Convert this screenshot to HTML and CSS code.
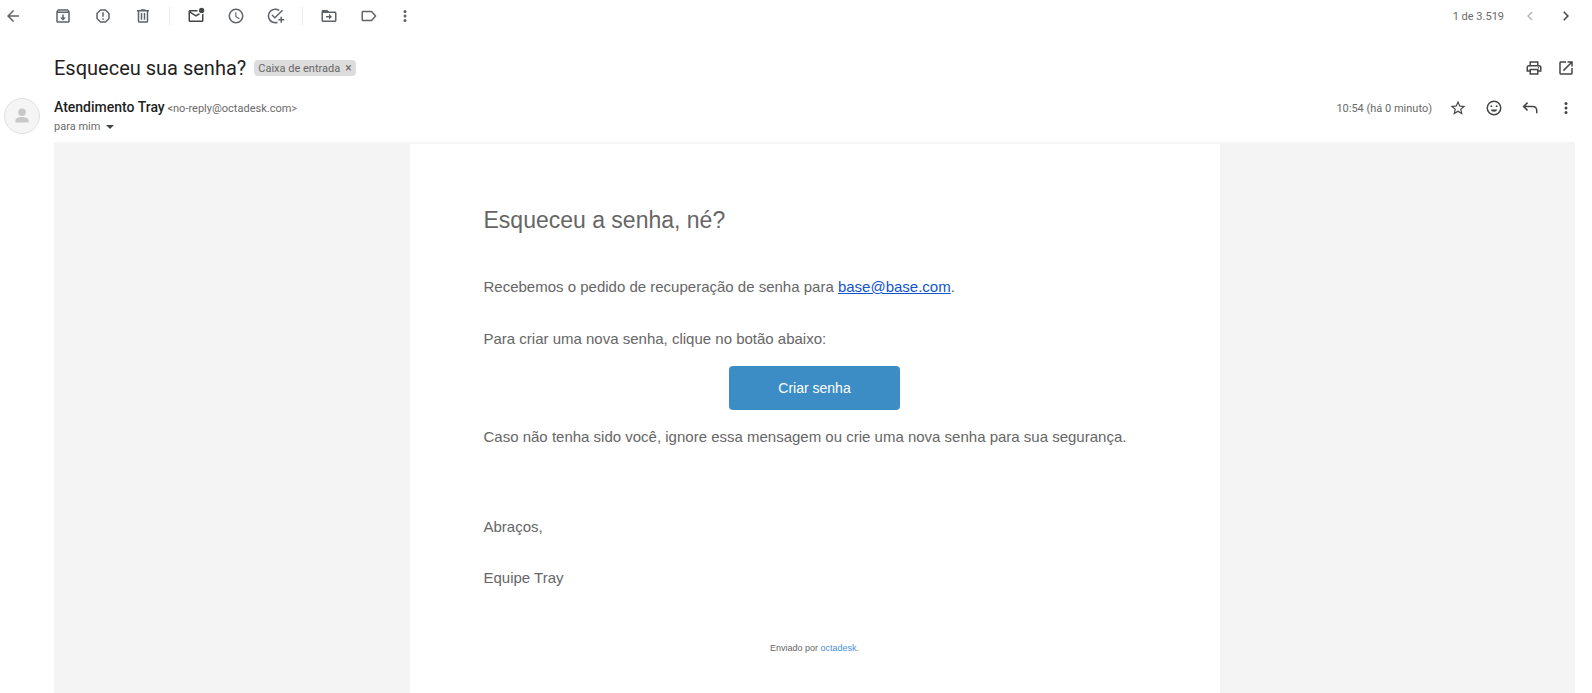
FILE: index.html
```html
<!DOCTYPE html>
<html lang="pt-BR">
<head>
  <meta charset="utf-8">
  <title>Esqueceu sua senha?</title>
  <link rel="stylesheet" href="styles.css">
</head>
<body>
  <header class="toolbar">
    <div class="toolbar-back">
      <button class="icon-btn" aria-label="Voltar">
        <svg viewBox="0 0 24 24"><path d="M20 11H7.800l5.600-5.600L12 4l-8 8 8 8 1.400-1.400L7.800 13H20z"/></svg>
      </button>
    </div>
    <div class="toolbar-actions">
      <button class="icon-btn" aria-label="Arquivar">
        <svg viewBox="0 0 24 24"><path d="M20.500 5.200l-1.400-1.700C18.900 3.200 18.500 3 18 3H6c-.5 0-.9.2-1.200.5L3.500 5.200C3.200 5.600 3 6 3 6.500V19c0 1.100.9 2 2 2h14c1.100 0 2-.9 2-2V6.500c0-.5-.2-.9-.5-1.300zM6.200 5h11.600l.8 1H5.400zM5 19V8h14v11zm8-9h-2v4H8l4 4 4-4h-3z"/></svg>
      </button>
      <button class="icon-btn" aria-label="Denunciar spam">
        <svg viewBox="0 0 24 24"><path d="M15.700 3H8.300L3 8.300v7.400L8.300 21h7.400l5.300-5.300V8.300zM19 14.900L14.900 19H9.100L5 14.900V9.100L9.100 5h5.800L19 9.100zM11 7h2v6h-2zm0 8h2v2h-2z"/></svg>
      </button>
      <button class="icon-btn" aria-label="Excluir">
        <svg viewBox="0 0 24 24"><path d="M15 4V3H9v1H4v2h1v13c0 1.100.9 2 2 2h10c1.100 0 2-.9 2-2V6h1V4zm2 15H7V6h10zM9 8h2v9H9zm4 0h2v9h-2z"/></svg>
      </button>
      <span class="divider"></span>
      <button class="icon-btn dark" aria-label="Marcar como não lida">
        <svg viewBox="0 0 24 24"><path d="M20 9.500V18H4V8l8 5 6-3.800c-.9-.1-1.700-.4-2.400-.9L12 10.700 4.400 6H14c-.1-.7 0-1.400.2-2H4c-1.100 0-2 .9-2 2v12c0 1.100.9 2 2 2h16c1.100 0 2-.9 2-2V8.500c-.6.500-1.300.8-2 1z"/><circle cx="19.500" cy="4.500" r="3.500"/></svg>
      </button>
      <button class="icon-btn" aria-label="Adiar">
        <svg viewBox="0 0 24 24"><path d="M12 2a10 10 0 1 0 0 20 10 10 0 0 0 0-20zm0 18a8 8 0 1 1 0-16 8 8 0 0 1 0 16zm.500-13H11v6l5.200 3.200.8-1.300-4.500-2.700z"/></svg>
      </button>
      <button class="icon-btn" aria-label="Adicionar às tarefas">
        <svg viewBox="0 0 24 24"><path d="M20 3.500L10.500 13 7.400 9.900 6 11.300l4.500 4.500L21.400 4.900zM11 20a8 8 0 1 1 4.500-14.600L17 4A10 10 0 1 0 14 21.500v-2.100c-.9.400-1.900.6-3 .6zM20 13h-2v3h-3v2h3v3h2v-3h3v-2h-3z"/></svg>
      </button>
      <span class="divider"></span>
      <button class="icon-btn" aria-label="Mover para">
        <svg viewBox="0 0 24 24"><path d="M20 6h-8l-2-2H4c-1.100 0-2 .9-2 2v12c0 1.100.9 2 2 2h16c1.100 0 2-.9 2-2V8c0-1.100-.9-2-2-2zm0 12H4V8h16zm-8-1l4-4-4-4v3H8v2h4z"/></svg>
      </button>
      <button class="icon-btn" aria-label="Marcadores">
        <svg viewBox="0 0 24 24"><path d="M16.500 5.800C16.100 5.300 15.600 5 15 5H4c-1.100 0-2 .9-2 2v10c0 1.100.9 2 2 2h11c.6 0 1.100-.3 1.500-.8L22 12zM15 17H4V7h11l4.500 5z"/></svg>
      </button>
      <button class="icon-btn narrow" aria-label="Mais">
        <svg viewBox="0 0 24 24"><circle cx="12" cy="6" r="2"/><circle cx="12" cy="12" r="2"/><circle cx="12" cy="18" r="2"/></svg>
      </button>
    </div>
    <div class="pager">
      <span class="pager-count">1 de 3.519</span>
      <button class="icon-btn" aria-label="Mais recentes" disabled>
        <svg viewBox="0 0 24 24"><path d="M15.400 7.400L14 6l-6 6 6 6 1.400-1.400-4.600-4.600z"/></svg>
      </button>
      <button class="icon-btn dark" aria-label="Mais antigas">
        <svg viewBox="0 0 24 24"><path d="M9.700 5.700L8.300 7.100l4.900 4.900-4.900 4.900 1.400 1.400L16 12z"/></svg>
      </button>
    </div>
  </header>

  <main class="message">
    <div class="subject-row">
      <h1>Esqueceu sua senha?</h1>
      <span class="label-chip">Caixa de entrada <button class="chip-close" aria-label="Remover marcador">×</button></span>
      <div class="subject-actions">
        <button class="icon-btn dark" aria-label="Imprimir">
          <svg viewBox="0 0 24 24"><path d="M19 8h-1V3H6v5H5c-1.700 0-3 1.300-3 3v6h4v4h12v-4h4v-6c0-1.700-1.300-3-3-3zM8 5h8v3H8zm8 14H8v-4h8zm2-4v-2H6v2H4v-4c0-.6.400-1 1-1h14c.6 0 1 .4 1 1v4z"/><circle cx="18" cy="11.500" r="1"/></svg>
        </button>
        <button class="icon-btn dark" aria-label="Abrir em nova janela">
          <svg viewBox="0 0 24 24"><path d="M19 19H5V5h7V3H5c-1.100 0-2 .9-2 2v14c0 1.100.9 2 2 2h14c1.100 0 2-.9 2-2v-7h-2zM14 3v2h3.600l-9.800 9.800 1.400 1.400L19 6.400V10h2V3z"/></svg>
        </button>
      </div>
    </div>

    <div class="sender-row">
      <div class="avatar">
        <svg viewBox="0 0 36 36"><circle cx="18" cy="14" r="4"/><path d="M11 25v-2c0-3 4-4 7-4s7 1 7 4v2z"/></svg>
      </div>
      <div class="sender">
        <div class="sender-from"><strong>Atendimento Tray</strong> <span class="sender-email">&lt;no-reply@octadesk.com&gt;</span></div>
        <button class="sender-to">para mim <span class="caret"></span></button>
      </div>
      <div class="sender-actions">
        <span class="time">10:54 (há 0 minuto)</span>
        <button class="icon-btn dark" aria-label="Com estrela">
          <svg viewBox="0 0 24 24"><path d="M22 9.200l-7.200-.6L12 2 9.200 8.600 2 9.200l5.500 4.800L5.800 21l6.200-3.700 6.200 3.700-1.700-7zM12 15.400l-3.800 2.300 1-4.300-3.300-2.900 4.400-.4L12 6.100l1.700 4 4.400.4-3.300 2.900 1 4.300z"/></svg>
        </button>
        <button class="icon-btn dark" aria-label="Reagir">
          <svg viewBox="0 0 24 24"><path d="M12 2a10 10 0 1 0 0 20 10 10 0 0 0 0-20zm0 18a8 8 0 1 1 0-16 8 8 0 0 1 0 16zM7.500 14h9a4.800 4.800 0 0 1-9 0z"/><circle cx="8.500" cy="9.500" r="1.300"/><circle cx="15.500" cy="9.500" r="1.300"/></svg>
        </button>
        <button class="icon-btn dark" aria-label="Responder">
          <svg viewBox="0 0 24 24"><path d="M9.500 14.500L8 16l-6-6 6-6 1.500 1.500L6 9h10c3.300 0 6 2.700 6 6v4h-2v-4c0-2.200-1.800-4-4-4H6z"/></svg>
        </button>
        <button class="icon-btn dark" aria-label="Mais opções">
          <svg viewBox="0 0 24 24"><circle cx="12" cy="6" r="2"/><circle cx="12" cy="12" r="2"/><circle cx="12" cy="18" r="2"/></svg>
        </button>
      </div>
    </div>

    <div class="mail-body">
      <article class="mail-card">
        <h2>Esqueceu a senha, né?</h2>
        <p>Recebemos o pedido de recuperação de senha para <a href="mailto:base@base.com">base@base.com</a>.</p>
        <p>Para criar uma nova senha, clique no botão abaixo:</p>
        <button class="btn-primary">Criar senha</button>
        <p>Caso não tenha sido você, ignore essa mensagem ou crie uma nova senha para sua segurança.</p>
        <div class="signature">
          <p>Abraços,</p>
          <p>Equipe Tray</p>
        </div>
        <footer class="mail-footer">Enviado por <a href="#">octadesk</a>.</footer>
      </article>
    </div>
  </main>
</body>
</html>
```

FILE: styles.css
```css
* {
  box-sizing: border-box;
}
body {
  margin: 0;
  min-height: 100vh;
  display: flex;
  flex-direction: column;
  background-color: #fff;
  font-family: "Roboto", Arial, sans-serif;
  font-size: 11px;
  color: #6a6a6a;
}
button {
  padding: 0;
  border: none;
  background: none;
  font: inherit;
  color: inherit;
  cursor: pointer;
}

/* icons */
.icon-btn {
  display: flex;
  justify-content: center;
  align-items: center;
  width: 20px;
  height: 20px;
  color: #5f6368;
}
.icon-btn svg {
  flex: none;
  width: 18px;
  height: 18px;
  fill: currentColor;
}
.icon-btn.dark {
  color: #444746;
}
.icon-btn.narrow {
  width: 12px;
}
.icon-btn:disabled {
  color: #b8b8b8;
  cursor: default;
}

/* toolbar */
.toolbar {
  display: flex;
  align-items: center;
  height: 32px;
  padding-right: 16px;
}
.toolbar-back {
  width: 53px;
  padding-left: 3px;
}
.toolbar-actions {
  display: flex;
  align-items: center;
  gap: 20px;
}
.divider {
  width: 1px;
  height: 18px;
  margin: 0 -4px;
  background-color: #e8e8e8;
}
.pager {
  display: flex;
  align-items: center;
  gap: 16px;
  margin-left: auto;
}

/* subject */
.message {
  flex: 1;
  display: flex;
  flex-direction: column;
}
.subject-row {
  display: flex;
  align-items: center;
  height: 40px;
  margin-top: 16px;
  padding: 0 16px 0 54px;
}
.subject-row h1 {
  margin: 0;
  font-size: 20px;
  font-weight: 400;
  color: #1f1f1f;
}
.label-chip {
  display: flex;
  align-items: center;
  gap: 5px;
  height: 16px;
  margin-left: 8px;
  padding: 0 4px;
  border-radius: 4px;
  background-color: #ddd;
  color: #666;
}
.chip-close {
  font-size: 12px;
  line-height: 16px;
}
.subject-actions {
  display: flex;
  gap: 12px;
  margin-left: auto;
}

/* sender */
.sender-row {
  display: flex;
  align-items: flex-start;
  height: 54px;
  padding: 10px 16px 0 4px;
}
.avatar {
  width: 36px;
  height: 36px;
  margin-right: 14px;
  border: 1px solid #e0e0e0;
  border-radius: 50%;
  background-color: #f5f5f5;
}
.avatar svg {
  display: block;
  fill: #c8c8c8;
}
.sender {
  line-height: 18px;
}
.sender-from strong {
  font-size: 14px;
  font-weight: 500;
  color: #1f1f1f;
}
.sender-to {
  display: flex;
  align-items: center;
  gap: 6px;
  line-height: 18px;
}
.caret {
  border: 4px solid transparent;
  border-top-color: #444746;
  border-bottom: none;
}
.sender-actions {
  display: flex;
  align-items: center;
  gap: 16px;
  margin-left: auto;
}

/* mail content */
.mail-body {
  flex: 1;
  display: flex;
  justify-content: center;
  margin: 0 17px 0 54px;
  padding-top: 2px;
  background-color: #f4f4f4;
}
.mail-card {
  width: 100%;
  max-width: 810px;
  padding: 60px 74px 0;
  background-color: #fff;
  font-family: "Liberation Sans", Arial, sans-serif;
  font-size: 15px;
  line-height: 20px;
  color: #666;
}
.mail-card h2 {
  margin: 0 0 41px;
  font-size: 23px;
  font-weight: 400;
  line-height: 32px;
}
.mail-card p {
  margin: 0 0 32px;
}
.mail-card p a {
  color: #15c;
}
.btn-primary {
  display: block;
  height: 44px;
  margin: -15px auto 17px;
  padding: 0 49px;
  border-radius: 4px;
  background-color: #3c8dc5;
  font-size: 14px;
  color: #fff;
}
.mail-card .signature {
  margin-top: 70px;
}
.mail-card .signature p {
  margin-bottom: 31px;
}
.mail-footer {
  margin-top: 50px;
  font-size: 9px;
  text-align: center;
}
.mail-footer a {
  color: #4a90d9;
  text-decoration: none;
}
```
